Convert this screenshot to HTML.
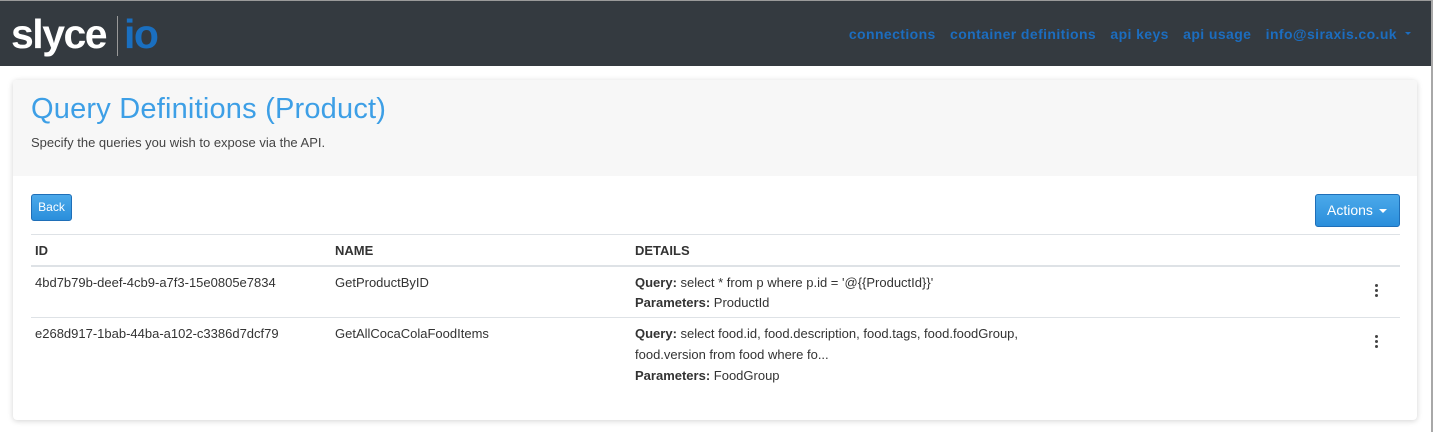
<!DOCTYPE html>
<html><head><meta charset="utf-8"><style>
*{box-sizing:border-box;margin:0;padding:0}
body{width:1433px;height:432px;overflow:hidden;background:#fff;font-family:"Liberation Sans",sans-serif;color:#333;font-size:13px;position:relative;border-right:2px solid #a8a8a8}
.nav{position:absolute;left:0;top:0;width:1431px;height:66px;background:#343a40;border-top:1px solid #9a9a9a}
.logo{position:absolute;left:11px;top:11px;font-size:41px;font-weight:bold;color:#fff;letter-spacing:-1.5px;line-height:44px}
.logo .bar{position:absolute;left:106px;top:4px;width:1px;height:40px;background:#999}
.logo .io{position:absolute;left:113px;top:0;color:#1a6fc0}
.links{position:absolute;right:34px;top:25px;font-size:14px;font-weight:bold;color:#1c6dbf;letter-spacing:0.4px}
.links span{margin-left:10px}
.caret{position:absolute;left:1405px;top:31px;border:3px solid transparent;border-top:3px solid #1c6dbf;border-bottom:0}
.card{position:absolute;left:13px;top:80px;width:1404px;height:340px;background:#fff;border-radius:4px;box-shadow:0 1px 6px rgba(0,0,0,.18)}
.head{height:96px;background:#f7f7f7;border-radius:4px 4px 0 0;padding:12px 18px}
h1{font-weight:normal;font-size:29px;color:#3d9fe6;line-height:34px;letter-spacing:0.2px}
.sub{margin-top:9px;font-size:13px;color:#444}
.btn{position:absolute;color:#fff;background:linear-gradient(#4ba9ea,#2a8edb);border:1px solid #1f6fb8;border-radius:3px}
.back{left:18px;top:114px;width:41px;height:27px;font-size:12px;line-height:25px;text-align:center}
.act{left:1302px;top:114px;width:85px;height:33px;font-size:14px;line-height:31px;padding-left:11px}
.act:after{content:"";position:absolute;right:12px;top:14px;border:4px solid transparent;border-top:4px solid #fff;border-bottom:0}
.hr{position:absolute;left:18px;width:1369px;height:1px;background:#dee2e6}
.t{position:absolute;white-space:nowrap;font-size:13px}
.th{font-weight:bold;color:#333}
.dots{position:absolute;left:1362px;width:3px}
.dots i{display:block;width:3px;height:3px;background:#444;border-radius:50%;margin-bottom:2px}
</style></head><body>
<div class="nav">
<div class="logo">slyce<div class="bar"></div><span class="io">io</span></div>
<div class="links"><span>connections</span> <span>container definitions</span> <span>api keys</span> <span>api usage</span> <span>info@siraxis.co.uk</span></div>
<div class="caret"></div>
</div>
<div class="card">
<div class="head"><h1>Query Definitions (Product)</h1><div class="sub">Specify the queries you wish to expose via the API.</div></div>
<div class="btn back">Back</div>
<div class="btn act">Actions</div>
<div class="hr" style="top:154px"></div>
<div class="t th" style="left:22px;top:163px">ID</div>
<div class="t th" style="left:322px;top:163px">NAME</div>
<div class="t th" style="left:622px;top:163px">DETAILS</div>
<div class="hr" style="top:185px;height:2px"></div>
<div class="t" style="left:22px;top:195px">4bd7b79b-deef-4cb9-a7f3-15e0805e7834</div>
<div class="t" style="left:322px;top:195px">GetProductByID</div>
<div class="t" style="left:622px;top:195px"><b>Query:</b> select * from p where p.id = '@{{ProductId}}'</div>
<div class="t" style="left:622px;top:215px"><b>Parameters:</b> ProductId</div>
<div class="dots" style="top:204px"><i></i><i></i><i></i></div>
<div class="hr" style="top:237px"></div>
<div class="t" style="left:22px;top:246px">e268d917-1bab-44ba-a102-c3386d7dcf79</div>
<div class="t" style="left:322px;top:246px">GetAllCocaColaFoodItems</div>
<div class="t" style="left:622px;top:246px"><b>Query:</b> select food.id, food.description, food.tags, food.foodGroup,</div>
<div class="t" style="left:622px;top:267px">food.version from food where fo...</div>
<div class="t" style="left:622px;top:288px"><b>Parameters:</b> FoodGroup</div>
<div class="dots" style="top:255px"><i></i><i></i><i></i></div>
</div>
</body></html>
